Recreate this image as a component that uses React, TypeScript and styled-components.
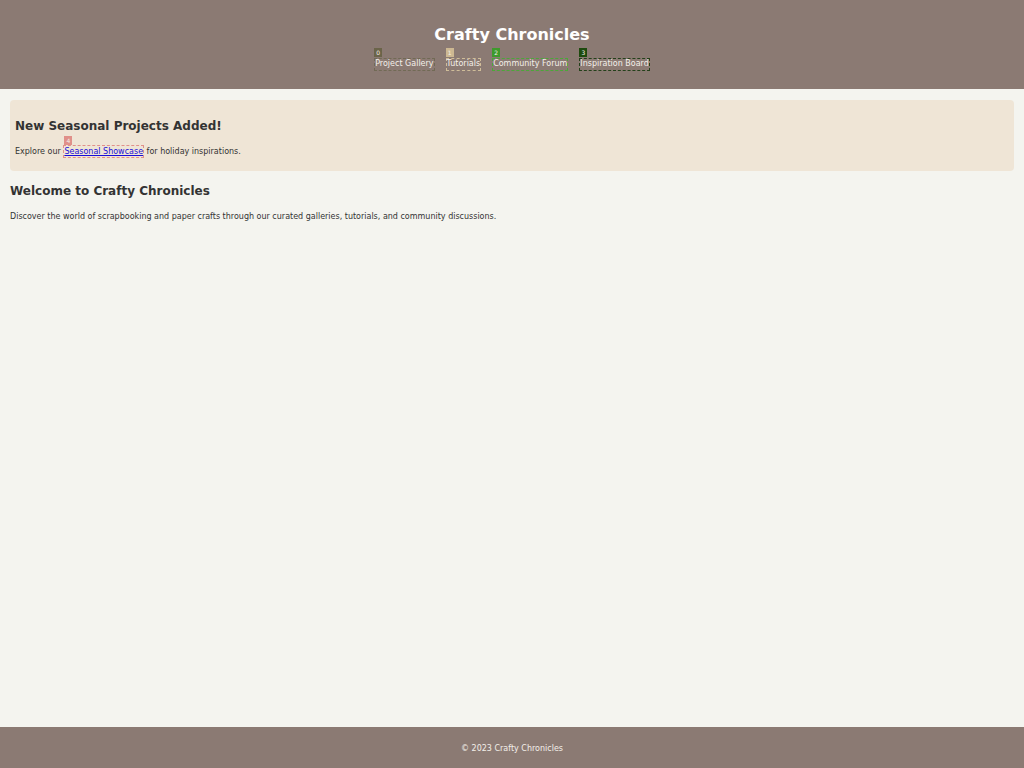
import React from "react";
import styled, { createGlobalStyle } from "styled-components";

const GlobalStyle = createGlobalStyle`
  html, body {
    margin: 0;
    padding: 0;
  }
  body {
    font-family: "DejaVu Sans", sans-serif;
    font-size: 8px;
    line-height: 1.6;
    color: #333333;
    background: #f4f4ef;
  }
`;

const Page = styled.div`
  display: flex;
  flex-direction: column;
  min-height: 100vh;
`;

const Header = styled.header`
  background: #8b7a73;
  color: #ffffff;
  text-align: center;
  padding: 22px 0 10px;
`;

const Title = styled.h1`
  margin: 0 0 10.7px;
  font-size: 16px;
  font-weight: bold;
  line-height: 1.6;
`;

const NavList = styled.ul`
  list-style: none;
  margin: 0 0 8px;
  padding: 0;
  display: flex;
  justify-content: center;
  gap: 11px;
`;

const NavItem = styled.li`
  position: relative;
`;

const Badge = styled.span<{ $bg: string; $fg?: string }>`
  position: absolute;
  left: 0;
  top: -10px;
  background: ${({ $bg }) => $bg};
  color: ${({ $fg }) => $fg || "#f4f0e8"};
  font-size: 6px;
  line-height: 9px;
  padding: 0 2px;
  min-width: 4px;
  text-align: center;
`;

const InlineBadge = styled(Badge)`
  top: -11px;
  left: 1px;
`;

const NavLink = styled.a<{ $line: string }>`
  display: inline-block;
  color: #f3efe9;
  text-decoration: none;
  border: 1px dashed ${({ $line }) => $line};
  line-height: 10.8px;
`;

const Main = styled.main`
  flex: 1;
  padding: 11px 10px 10px;
`;

const Banner = styled.section`
  background: #efe5d6;
  border-radius: 4px;
  padding: 7px 5px 4px;
`;

const Heading = styled.h2<{ $top?: number }>`
  margin: ${({ $top }) => ($top ?? 10)}px 0 10px;
  font-size: 12px;
  font-weight: bold;
  line-height: 1.6;
`;

const Text = styled.p`
  margin: 8px 0;
`;

const InlineWrap = styled.span`
  position: relative;
`;

const TextLink = styled.a`
  color: #1a0dd8;
  text-decoration: underline;
  border: 1px dashed #e0908a;
  padding: 1px 0;
`;

const Footer = styled.footer`
  background: #8b7a73;
  color: #f3efe9;
  text-align: center;
  padding: 16px 0 12px;
`;

const navItems = [
  { label: "Project Gallery", bg: "#6b6449", line: "#716a55" },
  { label: "Tutorials", bg: "#cdb892", line: "#cfbd99" },
  { label: "Community Forum", bg: "#3e9a2c", line: "#4aa838" },
  { label: "Inspiration Board", bg: "#1e4a0e", line: "#24401a" },
];

export default function App() {
  return (
    <Page>
      <GlobalStyle />
      <Header>
        <Title>Crafty Chronicles</Title>
        <nav>
          <NavList>
            {navItems.map((item, i) => (
              <NavItem key={item.label}>
                <Badge $bg={item.bg}>{i}</Badge>
                <NavLink href="#" $line={item.line}>
                  {item.label}
                </NavLink>
              </NavItem>
            ))}
          </NavList>
        </nav>
      </Header>
      <Main>
        <Banner>
          <Heading>New Seasonal Projects Added!</Heading>
          <Text>
            Explore our{" "}
            <InlineWrap>
              <InlineBadge $bg="#e0908a">4</InlineBadge>
              <TextLink href="#">Seasonal Showcase</TextLink>
            </InlineWrap>{" "}
            for holiday inspirations.
          </Text>
        </Banner>
        <Heading $top={11}>Welcome to Crafty Chronicles</Heading>
        <Text>
          Discover the world of scrapbooking and paper crafts through our
          curated galleries, tutorials, and community discussions.
        </Text>
      </Main>
      <Footer>© 2023 Crafty Chronicles</Footer>
    </Page>
  );
}
